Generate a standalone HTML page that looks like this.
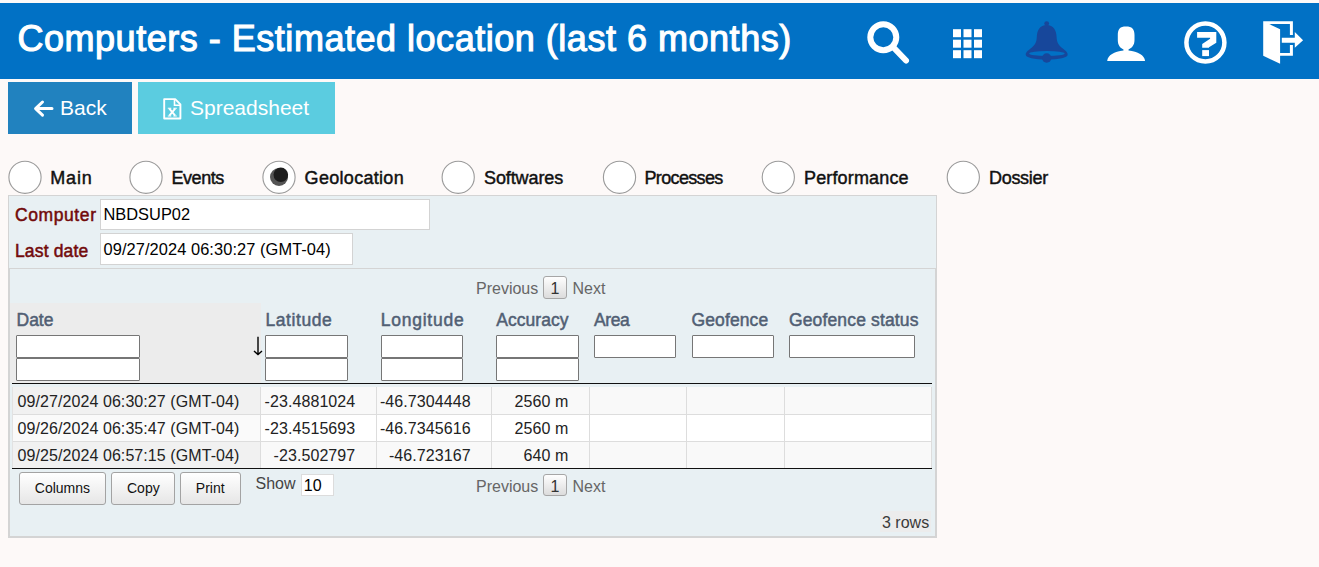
<!DOCTYPE html>
<html><head><meta charset="utf-8">
<style>
html,body{margin:0;padding:0;}
body{width:1319px;height:567px;overflow:hidden;background:#fdf9f8;position:relative;font-family:"Liberation Sans",sans-serif;}
.a{position:absolute;}
.t{position:absolute;white-space:nowrap;line-height:1;}
#hdr{left:0;top:3px;width:1319px;height:76px;background:#0171c5;}
.btn{position:absolute;}
.circ{position:absolute;box-sizing:border-box;border:1px solid #9a9a9a;border-radius:50%;background:#fff;}
.rl{font-size:18px;color:#111;-webkit-text-stroke:0.45px #111;}
#panel{left:8px;top:195px;width:927px;height:341px;background:#e8f0f3;border:1px solid #d4d4d4;}
#inner{left:9px;top:268px;width:925px;height:267px;border:1px solid #d4d4d4;}
.lbl{font-size:17.5px;color:#720a0a;-webkit-text-stroke:0.5px #720a0a;}
.inp{position:absolute;box-sizing:border-box;background:#fff;border:1px solid #d3d3d3;}
.it{font-size:16.4px;color:#000;}
.ch{font-size:17.5px;color:#515f74;-webkit-text-stroke:0.5px #515f74;}
.fi{position:absolute;box-sizing:border-box;background:#fff;border:1px solid #767676;border-radius:1px;}
.cell{position:absolute;}
.td{font-size:16px;color:#222;letter-spacing:0.08px;}
.pg{font-size:16px;color:#666;}
.pbox{position:absolute;box-sizing:border-box;border:1px solid #a6a6a6;border-radius:3px;background:linear-gradient(#fefefe,#dcdcdc);}
.dbtn{position:absolute;box-sizing:border-box;border:1px solid #a3a3a3;border-radius:3px;background:linear-gradient(#ffffff,#e6e6e6);}
.bt{font-size:14px;color:#111;}
</style></head>
<body>
<div id="hdr" class="a"></div>
<div class="t" id="title" style="left:17.5px;top:20.6px;font-size:36px;color:#fff;letter-spacing:0.52px;-webkit-text-stroke:1.1px #fff;">Computers - Estimated location (last 6 months)</div>

<!-- header icons -->
<svg class="a" style="left:0;top:0" width="1319" height="80" viewBox="0 0 1319 80">
  <!-- search -->
  <circle cx="883.3" cy="37.3" r="13" fill="none" stroke="#fff" stroke-width="6"/>
  <line x1="894" y1="48" x2="906" y2="60.5" stroke="#fff" stroke-width="6" stroke-linecap="round"/>
  <!-- grid -->
  <g fill="#fff">
    <rect x="953" y="29.2" width="8" height="8"/><rect x="963.5" y="29.2" width="8" height="8"/><rect x="974" y="29.2" width="8" height="8"/>
    <rect x="953" y="39.7" width="8" height="8"/><rect x="963.5" y="39.7" width="8" height="8"/><rect x="974" y="39.7" width="8" height="8"/>
    <rect x="953" y="50.2" width="8" height="8"/><rect x="963.5" y="50.2" width="8" height="8"/><rect x="974" y="50.2" width="8" height="8"/>
  </g>
  <!-- bell -->
  <g fill="#17479b">
    <circle cx="1046.7" cy="23.6" r="2.4"/>
    <path d="M1046.7 25 C1040 25 1037 30 1036.8 37 C1036.6 43 1034.5 45.5 1030 49 C1026.5 51.5 1025.6 53 1025.8 55 C1026 57.5 1034 59.6 1046.7 59.6 C1059.4 59.6 1067.4 57.5 1067.6 55 C1067.8 53 1066.9 51.5 1063.4 49 C1058.9 45.5 1056.8 43 1056.6 37 C1056.4 30 1053.4 25 1046.7 25 Z"/>
  </g>
  <ellipse cx="1046.9" cy="53.5" rx="17.8" ry="2.6" fill="#0171c5"/>
  <circle cx="1046.7" cy="58" r="4.7" fill="#17479b"/>
  <!-- person -->
  <path fill="#fff" d="M1126 26.5 C1120 26.5 1117.8 29 1117.8 35 L1117.8 40 C1117.8 45 1120 48 1123.5 49.5 L1123.5 50.6 C1114 52 1108 55 1107.2 61 L1145.1 61 C1144.3 55 1138 52 1128.5 50.6 L1128.5 49.5 C1132 48 1134.5 45 1134.5 40 L1134.5 35 C1134.5 29 1132 26.5 1126 26.5 Z"/>
  <!-- help -->
  <circle cx="1205.4" cy="42.5" r="19" fill="none" stroke="#fff" stroke-width="4.5"/>
  <path fill="#fff" d="M1197.1 32 L1216.3 32 L1216.3 42.8 L1209 47.3 L1209 47.8 L1202.2 47.8 L1202.2 43.9 L1210.1 38.8 L1210.1 37.7 L1197.1 37.7 Z"/>
  <rect x="1202.2" y="50.1" width="6.8" height="6" fill="#fff"/>
  <!-- exit -->
  <path fill="#fff" d="M1263.2 21.3 L1292.9 21.3 L1292.9 34.9 L1289.9 34.9 L1289.9 24.1 L1269.3 24.1 L1280.1 29.2 L1280.1 52.9 L1289.9 52.9 L1289.9 45 L1292.9 45 L1292.9 55.8 L1280.1 55.8 L1280.1 63.7 L1263.2 55.8 Z"/>
  <path fill="#fff" d="M1281.8 37.7 L1294.8 37.7 L1294.8 32 L1303.1 40.2 L1294.8 47.8 L1294.8 42.8 L1281.8 42.8 Z"/>
</svg>

<!-- buttons -->
<div class="btn" style="left:8px;top:82px;width:124px;height:52px;background:#2182bf;"></div>
<svg class="a" style="left:0;top:80px" width="140" height="60" viewBox="0 80 140 60">
  <path d="M52 108.6 L36 108.6 M42.5 102 L35.6 108.6 L42.5 115.2" fill="none" stroke="#fff" stroke-width="3" stroke-linecap="round" stroke-linejoin="round"/>
</svg>
<div class="t" id="back" style="left:60px;top:97.1px;font-size:21px;color:#fff;">Back</div>
<div class="btn" style="left:138px;top:82px;width:197px;height:52px;background:#5bcce0;"></div>
<svg class="a" style="left:150px;top:90px" width="40" height="36" viewBox="150 90 40 36">
  <path d="M164.2 99.1 L175.2 99.1 L180.4 104.4 L180.4 118.5 L164.2 118.5 Z" fill="none" stroke="#fff" stroke-width="1.9" stroke-linejoin="round"/>
  <path d="M174.5 99.1 L174.5 105.2 L180.4 105.2" fill="none" stroke="#fff" stroke-width="1.6"/>
  <path d="M169.3 108.6 L175.2 115.6 M175.2 108.6 L169.3 115.6" fill="none" stroke="#fff" stroke-width="1.9"/>
  <path d="M167.8 108.3 L171.3 108.3 M173.3 108.3 L176.8 108.3 M167.8 116 L171.3 116 M173.3 116 L176.8 116" fill="none" stroke="#fff" stroke-width="1.1"/>
</svg>
<div class="t" id="ss" style="left:190px;top:96.7px;font-size:21px;color:#fff;">Spreadsheet</div>

<!-- radios -->
<svg class="a" style="left:0;top:150px" width="1100" height="50" viewBox="0 150 1100 50"><circle cx="25" cy="177.3" r="16.1" fill="#fff" stroke="#9b9b9b" stroke-width="1.1"/><circle cx="146" cy="177.3" r="16.1" fill="#fff" stroke="#9b9b9b" stroke-width="1.1"/><circle cx="279" cy="177.3" r="16.1" fill="#fff" stroke="#9b9b9b" stroke-width="1.1"/><circle cx="458.2" cy="177.3" r="16.1" fill="#fff" stroke="#9b9b9b" stroke-width="1.1"/><circle cx="619.5" cy="177.3" r="16.1" fill="#fff" stroke="#9b9b9b" stroke-width="1.1"/><circle cx="778.3" cy="177.3" r="16.1" fill="#fff" stroke="#9b9b9b" stroke-width="1.1"/><circle cx="963.3" cy="177.3" r="16.1" fill="#fff" stroke="#9b9b9b" stroke-width="1.1"/></svg>
<div class="t rl" style="left:50.3px;top:168.8px;letter-spacing:0.8px;">Main</div>
<div class="t rl" style="left:171.5px;top:168.8px;letter-spacing:-0.45px;">Events</div>
<svg class="a" style="left:260px;top:158px" width="40" height="40" viewBox="260 158 40 40">
  <circle cx="279" cy="177" r="9" fill="#555"/>
  <circle cx="280.8" cy="174.8" r="7.3" fill="#1d1d1d"/>
</svg>
<div class="t rl" style="left:304.6px;top:168.8px;letter-spacing:0.3px;">Geolocation</div>
<div class="t rl" style="left:484px;top:168.8px;letter-spacing:-0.1px;">Softwares</div>
<div class="t rl" style="left:644.5px;top:168.8px;letter-spacing:-0.65px;">Processes</div>
<div class="t rl" style="left:804px;top:168.8px;letter-spacing:0.15px;">Performance</div>
<div class="t rl" style="left:989px;top:168.8px;letter-spacing:-0.3px;">Dossier</div>

<!-- panel -->
<div id="panel" class="a"></div>
<div class="t lbl" style="left:15px;top:206.7px;letter-spacing:0.59px;">Computer</div>
<div class="inp" style="left:100px;top:199px;width:330px;height:31px;"></div>
<div class="t it" style="left:103.5px;top:206px;">NBDSUP02</div>
<div class="t lbl" style="left:15px;top:242.5px;letter-spacing:0.14px;">Last date</div>
<div class="inp" style="left:100px;top:233px;width:253px;height:32px;"></div>
<div class="t it" style="left:103.5px;top:240.7px;letter-spacing:0.08px;">09/27/2024 06:30:27 (GMT-04)</div>

<div id="inner" class="a"></div>

<!-- pager top -->
<div class="t pg" style="left:476px;top:280.5px;">Previous</div>
<div class="pbox" style="left:543px;top:276px;width:24px;height:23px;"></div>
<div class="t" style="left:550.5px;top:280.5px;font-size:16px;color:#333;">1</div>
<div class="t pg" style="left:572.5px;top:280.5px;">Next</div>

<!-- header area -->
<div class="a" style="left:10px;top:303px;width:251px;height:80px;background:#ececec;"></div>
<div class="t ch" style="left:16.5px;top:311.8px;">Date</div>
<div class="t ch" style="left:265.5px;top:311.8px;letter-spacing:0.57px;">Latitude</div>
<div class="t ch" style="left:380.8px;top:311.8px;letter-spacing:0.75px;">Longitude</div>
<div class="t ch" style="left:496.3px;top:311.8px;letter-spacing:0.04px;">Accuracy</div>
<div class="t ch" style="left:594px;top:311.8px;letter-spacing:-0.43px;">Area</div>
<div class="t ch" style="left:691.5px;top:311.8px;letter-spacing:0.11px;">Geofence</div>
<div class="t ch" style="left:789px;top:311.8px;letter-spacing:0.14px;">Geofence status</div>

<div class="fi" style="left:16px;top:335px;width:124px;height:23px;"></div>
<div class="fi" style="left:16px;top:357.5px;width:124px;height:23px;"></div>
<div class="fi" style="left:265px;top:335px;width:83px;height:23px;"></div>
<div class="fi" style="left:265px;top:357.5px;width:83px;height:23px;"></div>
<div class="fi" style="left:381px;top:335px;width:82px;height:23px;"></div>
<div class="fi" style="left:381px;top:357.5px;width:82px;height:23px;"></div>
<div class="fi" style="left:496px;top:335px;width:83px;height:23px;"></div>
<div class="fi" style="left:496px;top:357.5px;width:83px;height:23px;"></div>
<div class="fi" style="left:594px;top:335px;width:82px;height:23px;"></div>
<div class="fi" style="left:692px;top:335px;width:82px;height:23px;"></div>
<div class="fi" style="left:789px;top:335px;width:126px;height:23px;"></div>
<svg class="a" style="left:250px;top:334px" width="14" height="24" viewBox="250 334 14 24"><path d="M258 336.8 L258 354.2 M254 351 L258 354.6 L262 351" fill="none" stroke="#000" stroke-width="1.4"/></svg>

<div class="a" style="left:12px;top:383px;width:920px;height:1px;background:#111;"></div>

<!-- rows -->
<div class="a" style="left:12px;top:387px;width:920px;height:27px;background:#f9f9f9;"></div>
<div class="a" style="left:12px;top:387px;width:248px;height:27px;background:#f1f1f1;"></div>
<div class="a" style="left:12px;top:415px;width:920px;height:26px;background:#fff;"></div>
<div class="a" style="left:12px;top:415px;width:248px;height:26px;background:#fafafa;"></div>
<div class="a" style="left:12px;top:442px;width:920px;height:26px;background:#f9f9f9;"></div>
<div class="a" style="left:12px;top:442px;width:248px;height:26px;background:#f1f1f1;"></div>
<div class="a" style="left:12px;top:414px;width:920px;height:1px;background:#dddddd;"></div>
<div class="a" style="left:12px;top:441px;width:920px;height:1px;background:#dddddd;"></div>
<div class="a" style="left:260px;top:387px;width:1px;height:81px;background:#dddddd;"></div>
<div class="a" style="left:376px;top:387px;width:1px;height:81px;background:#dddddd;"></div>
<div class="a" style="left:491px;top:387px;width:1px;height:81px;background:#dddddd;"></div>
<div class="a" style="left:589px;top:387px;width:1px;height:81px;background:#dddddd;"></div>
<div class="a" style="left:686px;top:387px;width:1px;height:81px;background:#dddddd;"></div>
<div class="a" style="left:784px;top:387px;width:1px;height:81px;background:#dddddd;"></div>
<div class="a" style="left:931px;top:387px;width:1px;height:81px;background:#dddddd;"></div>
<div class="a" style="left:12px;top:387px;width:1px;height:81px;background:#e2e2e2;"></div>
<div class="a" style="left:12px;top:468px;width:920px;height:1px;background:#111;"></div>

<div class="t td" style="left:17.5px;top:394.3px;">09/27/2024 06:30:27 (GMT-04)</div>
<div class="t td" style="left:17.5px;top:421.3px;">09/26/2024 06:35:47 (GMT-04)</div>
<div class="t td" style="left:17.5px;top:448.3px;">09/25/2024 06:57:15 (GMT-04)</div>

<div class="t td" style="right:963.7px;top:394.3px;">-23.4881024</div>
<div class="t td" style="right:963.7px;top:421.3px;">-23.4515693</div>
<div class="t td" style="right:963.7px;top:448.3px;">-23.502797</div>
<div class="t td" style="right:848.3px;top:394.3px;">-46.7304448</div>
<div class="t td" style="right:848.3px;top:421.3px;">-46.7345616</div>
<div class="t td" style="right:848.3px;top:448.3px;">-46.723167</div>
<div class="t td" style="right:750.6px;top:394.3px;">2560 m</div>
<div class="t td" style="right:750.6px;top:421.3px;">2560 m</div>
<div class="t td" style="right:750.6px;top:448.3px;">640 m</div>

<!-- bottom -->
<div class="dbtn" style="left:19px;top:472px;width:87px;height:33px;"></div>
<div class="t bt" style="left:34.8px;top:481.3px;">Columns</div>
<div class="dbtn" style="left:111px;top:472px;width:64px;height:33px;"></div>
<div class="t bt" style="left:127px;top:481.3px;">Copy</div>
<div class="dbtn" style="left:180px;top:472px;width:61px;height:33px;"></div>
<div class="t bt" style="left:195.8px;top:481.3px;">Print</div>

<div class="t" style="left:255.5px;top:475.8px;font-size:16px;color:#444;">Show</div>
<div class="inp" style="left:301px;top:474px;width:33px;height:22px;border-color:#dcdcdc;"></div>
<div class="t" style="left:303.8px;top:478px;font-size:16px;color:#000;">10</div>

<div class="t pg" style="left:476px;top:478.8px;">Previous</div>
<div class="pbox" style="left:543px;top:474px;width:24px;height:22px;"></div>
<div class="t" style="left:550.5px;top:478.8px;font-size:16px;color:#333;">1</div>
<div class="t pg" style="left:572.5px;top:478.8px;">Next</div>

<div class="a" style="left:880px;top:511px;width:51px;height:21px;background:#ececec;"></div>
<div class="t" style="left:882px;top:514.5px;font-size:16px;color:#3a3a3a;">3 rows</div>

</body></html>
